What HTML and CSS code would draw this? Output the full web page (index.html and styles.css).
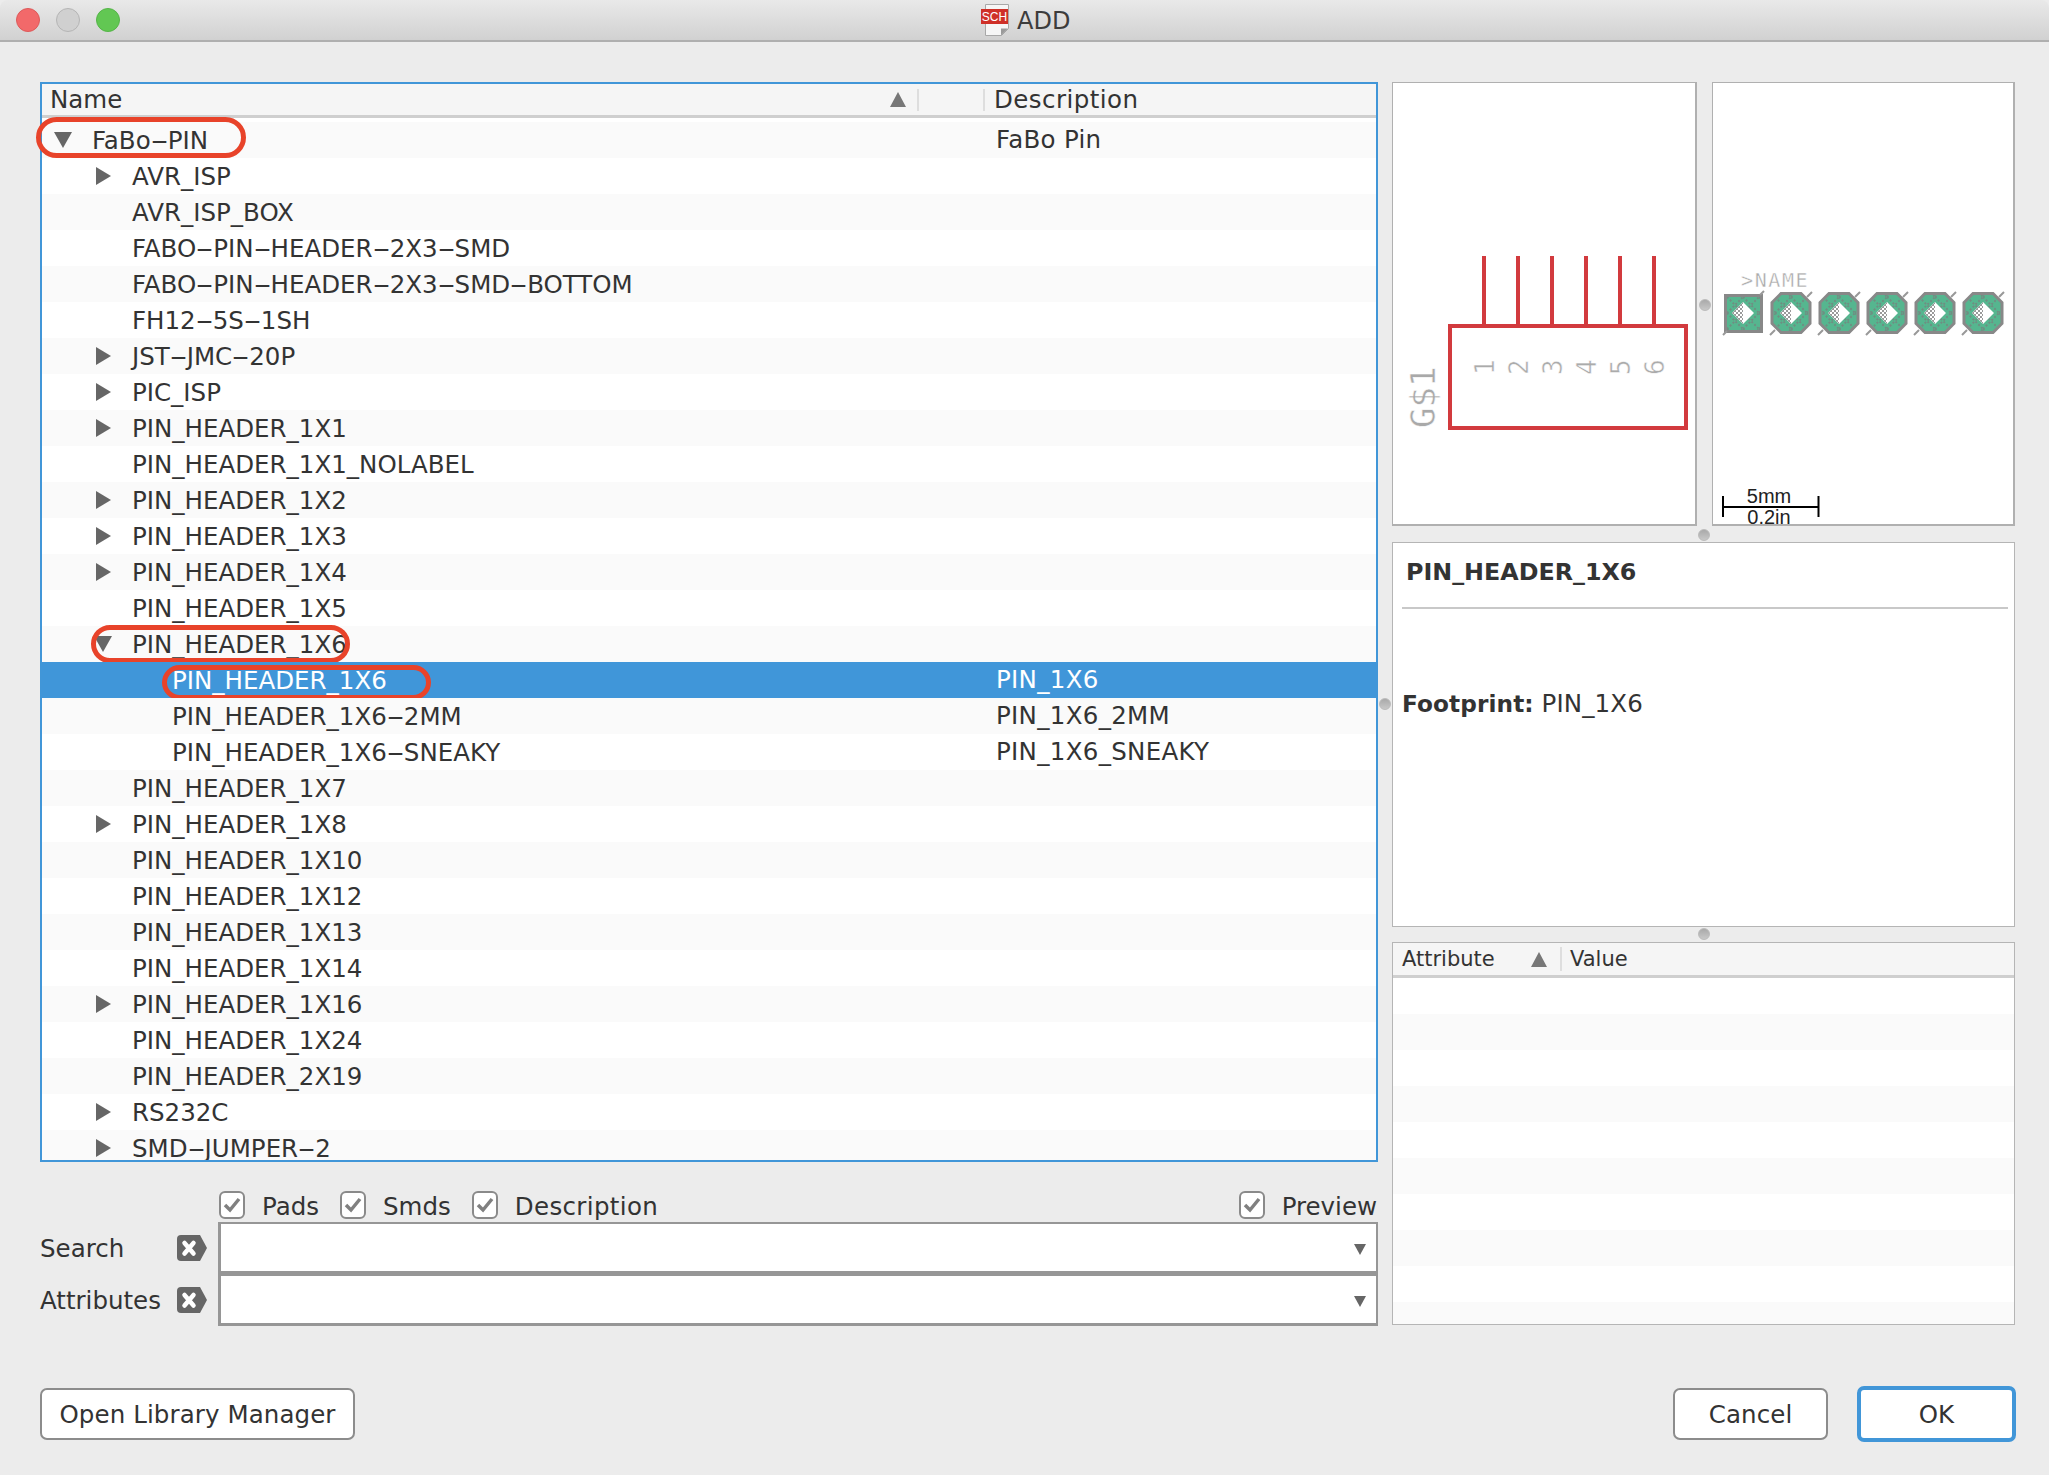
FILE: index.html
```html
<!DOCTYPE html>
<html lang="en">
<head>
<meta charset="utf-8">
<title>ADD</title>
<link rel="stylesheet" href="styles.css">
</head>
<body>
<div class="window">
  <header class="titlebar">
    <div class="lights"><span class="light red"></span><span class="light grey"></span><span class="light green"></span></div>
    <div class="title">
      <svg class="title-icon" width="28" height="32" viewBox="0 0 28 32"><path d="M4.500.5h23v24l-7 7h-16z" fill="#f6f6f6" stroke="#a8a8a8"/><path d="M27 24.500h-7v7z" fill="#9a9a9a"/><rect x="0" y="5" width="27" height="15" fill="#cf3028"/><text x="13.500" y="16.500" class="sch">SCH</text></svg>
      <span>ADD</span>
    </div>
  </header>
  <main class="main">
    <section class="left">
      <div class="tree">
        <div class="thead">
          <span class="th-name">Name</span>
          <span class="th-sort"><i class="sort"></i></span>
          <span class="th-gap"></span>
          <span class="th-desc">Description</span>
        </div>
        <div class="tbody">
          <div class="row odd"><i class="tw down l0"></i><span class="nm">FaBo<span class="hy">-</span>PIN</span><span class="ds">FaBo Pin</span></div>
          <div class="row l1"><i class="tw right"></i><span class="nm">AVR_ISP</span></div>
          <div class="row odd l1"><i class="tw"></i><span class="nm">AVR_ISP_BOX</span></div>
          <div class="row l1"><i class="tw"></i><span class="nm">FABO<span class="hy">-</span>PIN<span class="hy">-</span>HEADER<span class="hy">-</span>2X3<span class="hy">-</span>SMD</span></div>
          <div class="row odd l1"><i class="tw"></i><span class="nm">FABO<span class="hy">-</span>PIN<span class="hy">-</span>HEADER<span class="hy">-</span>2X3<span class="hy">-</span>SMD<span class="hy">-</span>BOTTOM</span></div>
          <div class="row l1"><i class="tw"></i><span class="nm">FH12<span class="hy">-</span>5S<span class="hy">-</span>1SH</span></div>
          <div class="row odd l1"><i class="tw right"></i><span class="nm">JST<span class="hy">-</span>JMC<span class="hy">-</span>20P</span></div>
          <div class="row l1"><i class="tw right"></i><span class="nm">PIC_ISP</span></div>
          <div class="row odd l1"><i class="tw right"></i><span class="nm">PIN_HEADER_1X1</span></div>
          <div class="row l1"><i class="tw"></i><span class="nm">PIN_HEADER_1X1_NOLABEL</span></div>
          <div class="row odd l1"><i class="tw right"></i><span class="nm">PIN_HEADER_1X2</span></div>
          <div class="row l1"><i class="tw right"></i><span class="nm">PIN_HEADER_1X3</span></div>
          <div class="row odd l1"><i class="tw right"></i><span class="nm">PIN_HEADER_1X4</span></div>
          <div class="row l1"><i class="tw"></i><span class="nm">PIN_HEADER_1X5</span></div>
          <div class="row odd l1"><i class="tw down"></i><span class="nm">PIN_HEADER_1X6</span><b class="oval oval-b"></b></div>
          <div class="row sel l2"><span class="nm">PIN_HEADER_1X6</span><span class="ds">PIN_1X6</span><b class="oval oval-c"></b></div>
          <div class="row odd l2"><span class="nm">PIN_HEADER_1X6<span class="hy">-</span>2MM</span><span class="ds">PIN_1X6_2MM</span></div>
          <div class="row l2"><span class="nm">PIN_HEADER_1X6<span class="hy">-</span>SNEAKY</span><span class="ds">PIN_1X6_SNEAKY</span></div>
          <div class="row odd l1"><i class="tw"></i><span class="nm">PIN_HEADER_1X7</span></div>
          <div class="row l1"><i class="tw right"></i><span class="nm">PIN_HEADER_1X8</span></div>
          <div class="row odd l1"><i class="tw"></i><span class="nm">PIN_HEADER_1X10</span></div>
          <div class="row l1"><i class="tw"></i><span class="nm">PIN_HEADER_1X12</span></div>
          <div class="row odd l1"><i class="tw"></i><span class="nm">PIN_HEADER_1X13</span></div>
          <div class="row l1"><i class="tw"></i><span class="nm">PIN_HEADER_1X14</span></div>
          <div class="row odd l1"><i class="tw right"></i><span class="nm">PIN_HEADER_1X16</span></div>
          <div class="row l1"><i class="tw"></i><span class="nm">PIN_HEADER_1X24</span></div>
          <div class="row odd l1"><i class="tw"></i><span class="nm">PIN_HEADER_2X19</span></div>
          <div class="row l1"><i class="tw right"></i><span class="nm">RS232C</span></div>
          <div class="row odd l1"><i class="tw right"></i><span class="nm">SMD<span class="hy">-</span>JUMPER<span class="hy">-</span>2</span></div>
        </div>
      </div>
      <b class="oval oval-a"></b>
      <span class="grip grip-tree"></span>
      <div class="options">
        <label class="check"><i class="box"><svg width="18" height="16" viewBox="0 0 18 16"><path d="M2 8l5 5 9-11" class="tick"/></svg></i>Pads</label>
        <label class="check"><i class="box"><svg width="18" height="16" viewBox="0 0 18 16"><path d="M2 8l5 5 9-11" class="tick"/></svg></i>Smds</label>
        <label class="check"><i class="box"><svg width="18" height="16" viewBox="0 0 18 16"><path d="M2 8l5 5 9-11" class="tick"/></svg></i><span class="wide">Description</span></label>
        <label class="check check-end"><i class="box"><svg width="18" height="16" viewBox="0 0 18 16"><path d="M2 8l5 5 9-11" class="tick"/></svg></i>Preview</label>
      </div>
      <div class="field">
        <span class="flabel">Search</span>
        <svg class="clear" width="30" height="26" viewBox="0 0 30 26"><path d="M4 0h19l7 13-7 13H4a4 4 0 0 1-4-4V4a4 4 0 0 1 4-4z" fill="#666"/><path d="M7.500 8l9 10.500M16.500 8l-9 10.500" stroke="#fff" stroke-width="4.500" stroke-linecap="round"/></svg>
        <div class="combo"><i class="caret"></i></div>
      </div>
      <div class="field field-2">
        <span class="flabel">Attributes</span>
        <svg class="clear" width="30" height="26" viewBox="0 0 30 26"><path d="M4 0h19l7 13-7 13H4a4 4 0 0 1-4-4V4a4 4 0 0 1 4-4z" fill="#666"/><path d="M7.500 8l9 10.500M16.500 8l-9 10.500" stroke="#fff" stroke-width="4.500" stroke-linecap="round"/></svg>
        <div class="combo"><i class="caret"></i></div>
      </div>
    </section>
    <section class="right">
      <div class="previews">
        <div class="pane">
          <svg width="305" height="444" viewBox="1392 82 305 444" class="draw">
            <g class="wire">
              <path d="M1484 256v70M1518 256v70M1552 256v70M1586 256v70M1620 256v70M1654 256v70"/>
              <rect x="1450" y="326" width="236" height="102"/>
            </g>
            <g class="pin-no">
              <text transform="translate(1494 375) rotate(-90)">1</text>
              <text transform="translate(1528 375) rotate(-90)">2</text>
              <text transform="translate(1562 375) rotate(-90)">3</text>
              <text transform="translate(1596 375) rotate(-90)">4</text>
              <text transform="translate(1630 375) rotate(-90)">5</text>
              <text transform="translate(1664 375) rotate(-90)">6</text>
            </g>
            <text class="gname" transform="translate(1435 428) rotate(-90)">G$1</text>
          </svg>
        </div>
        <div class="pane">
          <svg width="303" height="444" viewBox="1712 82 303 444" class="draw">
            <defs>
              <pattern id="hatch" width="16" height="16" patternUnits="userSpaceOnUse" patternTransform="translate(1727 297)">
                <path d="M0 16L16 0M0 0L16 16" stroke="#6e8f82" stroke-width="2" stroke-dasharray="2 2"/>
              </pattern>
              <pattern id="dither" width="4" height="4" patternUnits="userSpaceOnUse">
                <path d="M0 0h2v2H0zM2 2h2v2H2z" fill="#9a9a9a"/>
              </pattern>
            </defs>
            <text class="pname" x="1741" y="287">&gt;NAME</text>
            <g class="pads">
              <rect x="1725.500" y="295.500" width="36" height="36"/>
              <path d="M1781 293.500h20l9 9v21l-9 9h-20l-9-9v-21z"/>
              <path d="M1829 293.500h20l9 9v21l-9 9h-20l-9-9v-21z"/>
              <path d="M1877 293.500h20l9 9v21l-9 9h-20l-9-9v-21z"/>
              <path d="M1925 293.500h20l9 9v21l-9 9h-20l-9-9v-21z"/>
              <path d="M1973 293.500h20l9 9v21l-9 9h-20l-9-9v-21z"/>
            </g>
            <g class="hatch">
              <rect x="1727" y="297" width="33" height="33"/>
              <path d="M1782 295h18l8 8v20l-8 8h-18l-8-8v-20z"/>
              <path d="M1830 295h18l8 8v20l-8 8h-18l-8-8v-20z"/>
              <path d="M1878 295h18l8 8v20l-8 8h-18l-8-8v-20z"/>
              <path d="M1926 295h18l8 8v20l-8 8h-18l-8-8v-20z"/>
              <path d="M1974 295h18l8 8v20l-8 8h-18l-8-8v-20z"/>
            </g>
            <g class="stubs">
              <path d="M1723 335l4-4M1760 295l4-4M1770 335l5-5M1807 297l5-5M1818 335l5-5M1855 297l5-5M1866 335l5-5M1903 297l5-5M1914 335l5-5M1951 297l5-5M1962 335l5-5M1999 297l5-5"/>
            </g>
            <g class="holes">
              <path d="M1743 302l11 11-11 11-11-11zM1791 302l11 11-11 11-11-11zM1839 302l11 11-11 11-11-11zM1887 302l11 11-11 11-11-11zM1935 302l11 11-11 11-11-11zM1983 302l11 11-11 11-11-11z"/>
            </g>
            <g class="dither">
              <path d="M1743 302v22l-11-11zM1791 302v22l-11-11zM1839 302v22l-11-11zM1887 302v22l-11-11zM1935 302v22l-11-11zM1983 302v22l-11-11z"/>
            </g>
            <path class="scale" d="M1723 496v21M1818.500 496v21M1723 507h95.500"/>
            <text class="stext" x="1769" y="503">5mm</text>
            <text class="stext" x="1769" y="524">0.2in</text>
          </svg>
        </div>
      </div>
      <span class="grip grip-v"></span>
      <span class="grip grip-h"></span>
      <div class="info">
        <h1 class="info-title">PIN_HEADER_1X6</h1>
        <hr class="info-rule">
        <p class="info-text"><b>Footprint:</b> PIN_1X6</p>
      </div>
      <span class="grip grip-attr"></span>
      <div class="attrs">
        <div class="ahead">
          <span class="a-name">Attribute</span>
          <i class="sort a-sort"></i>
          <span class="a-val">Value</span>
        </div>
        <div class="arows">
          <div class="arow"></div><div class="arow odd"></div><div class="arow"></div><div class="arow odd"></div><div class="arow"></div><div class="arow odd"></div><div class="arow"></div><div class="arow odd"></div><div class="arow"></div><div class="arow odd"></div>
        </div>
      </div>
    </section>
  </main>
  <footer class="footer">
    <button class="btn btn-lib">Open Library Manager</button>
    <div class="actions">
      <button class="btn btn-cancel">Cancel</button>
      <button class="btn btn-ok">OK</button>
    </div>
  </footer>
</div>
</body>
</html>
```

FILE: styles.css
```css
* { box-sizing: border-box; }
html, body { margin: 0; padding: 0; background: #ececec; }
body { font-family: "DejaVu Sans", "Open Sans", sans-serif; color: #333; font-size: 24.500px; }
i, b { display: block; font-style: normal; }
.window { width: 2049px; height: 1475px; display: flex; flex-direction: column; overflow: hidden; background: #ececec; }

.titlebar { position: relative; height: 42px; flex: none; background: linear-gradient(#e9e9e9, #d1d1d1); border-bottom: 2px solid #afafaf; border-radius: 8px 8px 0 0; }
.lights { display: flex; gap: 16px; padding: 8px 0 0 16px; }
.light { width: 24px; height: 24px; border-radius: 50%; }
.red { background: #f2696a; border: 1px solid #dd5a5a; }
.grey { background: #d0d0d0; border: 1px solid #b5b5b5; }
.green { background: #62c753; border: 1px solid #55b548; }
.title { position: absolute; left: 981px; top: 5px; display: flex; align-items: center; gap: 8px; font-size: 24px; color: #3c3c3c; height: 32px; }
.title-icon { position: relative; top: -1px; }
.sch { font: 12px "Liberation Sans", sans-serif; fill: #fff; text-anchor: middle; }

.main { display: flex; gap: 14px; padding: 40px 0 0 40px; height: 1346px; flex: none; }
.left { position: relative; width: 1338px; flex: none; }
.right { position: relative; width: 623px; flex: none; }

.tree { height: 1080px; border: 2px solid #4196d8; background: #fff; overflow: hidden; }
.thead { display: flex; height: 34px; background: #f5f5f5; border-bottom: 3px solid #cfcfcf; align-items: center; margin-bottom: 4px; }
.th-name { width: 848px; padding-left: 8px; line-height: 30px; }
.th-sort { width: 29px; height: 22px; border-right: 2px solid #dedede; display: flex; align-items: center; }
.sort { width: 0; height: 0; border-left: 8px solid transparent; border-right: 8px solid transparent; border-bottom: 15px solid #777; }
.th-gap { width: 66px; height: 22px; border-right: 2px solid #dedede; }
.th-desc { padding-left: 9px; line-height: 30px; letter-spacing: .45px; }
.row { position: relative; display: flex; align-items: center; height: 36px; background: #fff; white-space: nowrap; }
.row.odd { background: #fafafa; }
.row.sel { background: #4096d9; color: #fff; }
.nm { width: 0; flex: none; overflow: visible; }
.hy { display: inline-block; width: 17px; text-align: center; transform: scaleX(2.1); }
.ds { position: absolute; left: 954px; top: 0; line-height: 36px; letter-spacing: .3px; }
.tw { flex: none; width: 0; height: 0; }
.tw.down { border-left: 9px solid transparent; border-right: 9px solid transparent; border-top: 16px solid #666; }
.tw.right { border-top: 9px solid transparent; border-bottom: 9px solid transparent; border-left: 15px solid #666; }
.row > .tw.down.l0 { margin-left: 12px; margin-right: 20px; }
.row.l1 > .tw { margin-left: 54px; }
.row.l1 > .tw.right { margin-right: 21px; }
.row.l1 > .tw.down { margin-left: 52px; margin-right: 20px; }
.row.l1 > .tw:not(.right):not(.down) { margin-right: 36px; }
.row.l2 > .nm { margin-left: 130px; }
.oval { position: absolute; border: 5px solid #e8432a; border-radius: 21px; }
.oval-a { left: -4px; top: 35px; width: 210px; height: 41px; }
.oval-b { left: 49px; top: -1px; width: 259px; height: 38px; }
.oval-c { left: 120px; top: 3px; width: 269px; height: 35px; }

.grip { position: absolute; width: 12px; height: 12px; border-radius: 50%; background: linear-gradient(#a9a9a9, #c8c8c8); border: 1px solid #bbb; z-index: 2; }
.grip-tree { left: 1339px; top: 616px; }
.grip-v { left: 307px; top: 217px; }
.grip-h { left: 306px; top: 447px; }
.grip-attr { left: 306px; top: 846px; }

.options { display: flex; align-items: center; height: 27px; margin-top: 30px; padding-left: 179px; line-height: 30px; }
.check { display: flex; align-items: center; white-space: nowrap; margin-right: 21px; padding-top: 3px; }
.check-end { margin-left: auto; margin-right: 1px; }
.wide { letter-spacing: .35px; }
.box { width: 26px; height: 28px; background: #fff; border: 2px solid #8a8a8a; border-radius: 6px; margin-right: 17px; display: flex; align-items: center; justify-content: center; margin-top: -4px; }
.tick { fill: none; stroke: #808080; stroke-width: 3.500; }
.field { display: flex; align-items: center; height: 52px; margin-top: 3px; }
.field-2 { margin-top: 0; height: 52px; }
.flabel { width: 137px; flex: none; }
.clear { flex: none; margin-right: 11px; }
.combo { position: relative; flex: 1; height: 100%; background: #fff; border: 3px solid #969696; border-width: 2px 2px 3px 3px; }
.caret { position: absolute; right: 10px; top: 20px; width: 0; height: 0; border-left: 6px solid transparent; border-right: 6px solid transparent; border-top: 11px solid #666; }

.previews { display: flex; gap: 15px; height: 444px; }
.pane { width: 305px; background: #fff; border: 1px solid #b0b0b0; border-bottom-width: 2px; border-right-width: 2px; position: relative; }
.pane + .pane { width: 303px; }
.draw { display: block; position: absolute; left: -1px; top: -1px; overflow: visible; }
.wire path, .wire rect { fill: none; stroke: #d23a3e; stroke-width: 4; }
.pin-no text { font: 26px "DejaVu Sans Mono", monospace; fill: #ababab; stroke: #fff; stroke-width: .5; }
.gname { font: 34px "DejaVu Sans Mono", monospace; fill: #a9a9a9; stroke: #fff; stroke-width: .5; }
.pname { font: 20px "DejaVu Sans Mono", monospace; fill: #aaa; stroke: #fff; stroke-width: .4; letter-spacing: 1.600px; }
.pads rect, .pads path { fill: #55b68f; stroke: #888; stroke-width: 3; }
.hatch rect, .hatch path { fill: url(#hatch); stroke: none; }
.stubs path { stroke: #999; stroke-width: 2; fill: none; }
.holes path { fill: #fff; }
.dither path { fill: url(#dither); }
.scale { fill: none; stroke: #000; stroke-width: 2; }
.stext { font: 20px "Liberation Sans", sans-serif; fill: #222; text-anchor: middle; }

.info { height: 385px; margin-top: 16px; background: #fff; border: 1px solid #b5b5b5; padding: 11px 6px 0 9px; }
.info-title { margin: 0 0 0 4px; font-size: 23.800px; font-weight: 700; line-height: 36px; color: #333; }
.info-rule { margin: 17px 0 0; border: 0; border-top: 2px solid #c8c8c8; }
.info-text { margin: 77px 0 0; line-height: 36px; letter-spacing: .1px; }
.info-text b { display: inline; font-size: 23.200px; color: #333; }

.attrs { height: 383px; margin-top: 15px; background: #fff; border: 1px solid #b5b5b5; overflow: hidden; }
.ahead { display: flex; align-items: center; height: 35px; background: #f5f5f5; border-bottom: 3px solid #cfcfcf; font-size: 21px; }
.a-name { width: 138px; padding-left: 9px; flex: none; }
.a-sort { flex: none; }
.a-val { margin-left: 13px; border-left: 2px solid #dedede; padding-left: 8px; line-height: 24px; }
.arow { height: 36px; background: #fff; }
.arow.odd { background: #fafafa; }

.footer { display: flex; align-items: center; justify-content: space-between; padding: 0 33px 0 40px; height: 52px; flex: none; }
.actions { display: flex; align-items: center; gap: 29px; }
.btn { font: inherit; color: #333; background: #fff; border: 2px solid #8c8c8c; border-radius: 7px; padding: 0; height: 52px; white-space: nowrap; letter-spacing: .1px; }
.btn-lib { width: 315px; }
.btn-cancel { width: 155px; }
.btn-ok { width: 159px; height: 56px; border: 4px solid #4196d8; }
```
